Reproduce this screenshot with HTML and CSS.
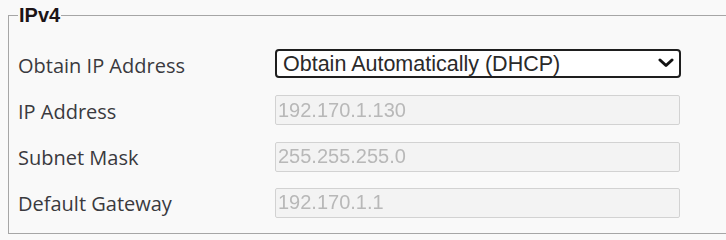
FILE: index.html
```html
<!DOCTYPE html>
<html>
<head>
<meta charset="utf-8">
<link rel="stylesheet" href="styles.css">
</head>
<body>
<fieldset class="group">
  <legend class="group-title">IPv4</legend>
  <div class="form">
    <label class="label">Obtain IP Address</label>
    <div class="select-wrap">
      <select class="select">
        <option>Obtain Automatically (DHCP)</option>
        <option>Manual</option>
      </select>
      <svg class="chevron" width="16" height="10" viewBox="0 0 16 10"><path d="M2 2 L8 7.5 L14 2" fill="none" stroke="#111" stroke-width="3" stroke-linecap="round" stroke-linejoin="round"/></svg>
    </div>
    <label class="label">IP Address</label>
    <input class="field" type="text" value="192.170.1.130" disabled>
    <label class="label">Subnet Mask</label>
    <input class="field" type="text" value="255.255.255.0" disabled>
    <label class="label">Default Gateway</label>
    <input class="field" type="text" value="192.170.1.1" disabled>
  </div>
</fieldset>
</body>
</html>
```
FILE: styles.css
```css
html, body {
  margin: 0;
  padding: 0;
  background: #f9f9f9;
  overflow: hidden;
  width: 726px;
  height: 240px;
}
.group {
  margin: 4px 0 0 8px;
  width: 740px;
  box-sizing: border-box;
  border: 1px solid #a6a6a6;
  padding: 22px 0 15px 9px;
}
.group-title {
  font-family: "Liberation Sans", Arial, sans-serif;
  font-weight: bold;
  font-size: 20px;
  line-height: 23px;
  color: #1c1416;
  padding: 0 1px;
  margin-left: 0;
}
.form {
  display: grid;
  grid-template-columns: 257px 406px;
  grid-auto-rows: 30px;
  row-gap: 16.3px;
  align-items: center;
}
.label {
  font-family: "Open Sans", sans-serif;
  font-size: 20px;
  color: #3a3a3e;
  position: relative;
  top: 1px;
}
.select-wrap {
  position: relative;
  height: 30px;
}
.select {
  appearance: none;
  -webkit-appearance: none;
  width: 100%;
  height: 29px;
  box-sizing: border-box;
  border: 2px solid #1e1e1e;
  border-radius: 4px;
  background: #fff;
  font-family: "Liberation Sans", Arial, sans-serif;
  font-size: 21.5px;
  color: #2a2a2a;
  padding: 0 0 0 6px;
  margin: 0;
}
.chevron {
  position: absolute;
  left: 383px;
  top: 9px;
}
.field {
  width: 405px;
  height: 30px;
  box-sizing: border-box;
  border: 1px solid #d2d2d2;
  border-radius: 2px;
  background: #f3f3f3;
  font-family: "Liberation Sans", Arial, sans-serif;
  font-size: 20px;
  color: #b8b8b8;
  padding: 0 0 0 2px;
  margin: 0;
  filter: blur(0.6px);
}
```
